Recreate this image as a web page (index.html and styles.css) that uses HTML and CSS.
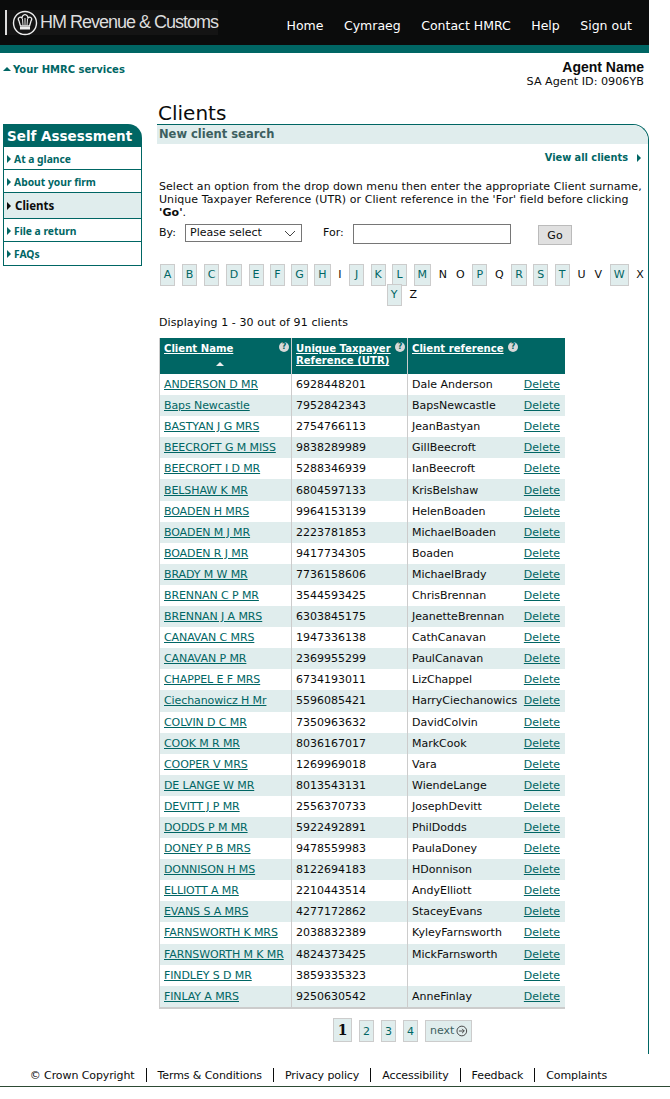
FILE: index.html
```html
<!DOCTYPE html>
<html>
<head>
	<meta charset="utf-8">
	<title>Clients - HM Revenue &amp; Customs</title>
	<link rel="stylesheet" href="styles.css">
</head>
<body>
	<div class="page">
		<header class="top">
			<div class="logo">
				<svg class="crest" width="26" height="26" viewBox="0 0 26 26">
					<circle cx="13" cy="13" r="11.5" fill="none" stroke="#eee" stroke-width="1.4"/>
					<path d="M7 11 C5 8 8 6 10 8 C10 5 12 5 13 4.500 C14 5 16 5 16 8 C18 6 21 8 19 11 L17.500 16 H8.500 Z" fill="none" stroke="#eee" stroke-width="1.300"/>
					<path d="M10.500 9 L11 15.500 M13 8 V15.500 M15.500 9 L15 15.500" stroke="#eee" stroke-width="1"/>
					<rect x="8" y="17" width="10" height="2.500" fill="#eee"/>
				</svg>
				<span class="logo-text">HM Revenue &amp; Customs</span>
			</div>
			<nav class="top-nav">
				<a href="#">Home</a>
				<a href="#">Cymraeg</a>
				<a href="#">Contact HMRC</a>
				<a href="#">Help</a>
				<a href="#">Sign out</a>
			</nav>
		</header>

		<div class="user-bar">
			<a class="services" href="#">Your HMRC services</a>
			<div class="agent">
				<strong>Agent Name</strong>
				<span>SA Agent ID: 0906YB</span>
			</div>
		</div>

		<div class="columns">
			<aside class="side">
				<h2>Self Assessment</h2>
				<ul>
					<li><a href="#">At a glance</a></li>
					<li><a href="#">About your firm</a></li>
					<li class="current"><a href="#">Clients</a></li>
					<li><a href="#">File a return</a></li>
					<li><a href="#">FAQs</a></li>
				</ul>
			</aside>

			<main class="content">
				<h1>Clients</h1>
				<section class="panel">
					<h3>New client search</h3>
					<div class="view-all"><a href="#">View all clients</a></div>
					<p class="intro">Select an option from the drop down menu then enter the appropriate Client surname, Unique Taxpayer Reference (UTR) or Client reference in the 'For' field before clicking <b>'Go'</b>.</p>
					<form class="search">
						<label class="by">By:</label>
						<span class="select">Please select
							<svg width="12" height="7" viewBox="0 0 12 7"><path d="M1 1 L6 6 L11 1" fill="none" stroke="#444" stroke-width="1"/></svg>
						</span>
						<label class="for">For:</label>
						<span class="field"></span>
						<button type="button" class="go">Go</button>
					</form>

					<div class="letters">
						<a href="#">A</a><a href="#">B</a><a href="#">C</a><a href="#">D</a><a href="#">E</a><a href="#">F</a><a href="#">G</a><a href="#">H</a><span>I</span><a href="#">J</a><a href="#">K</a><a href="#">L</a><a href="#">M</a><span>N</span><span>O</span><a href="#">P</a><span>Q</span><a href="#">R</a><a href="#">S</a><a href="#">T</a><span>U</span><span>V</span><a href="#">W</a><span>X</span><a href="#">Y</a><span>Z</span>
					</div>

					<p class="count">Displaying 1 - 30 out of 91 clients</p>

					<table class="clients">
						<thead>
							<tr>
								<th class="col-name"><a href="#">Client Name</a><i class="q">?</i><span class="sort"></span></th>
								<th class="col-utr"><a href="#">Unique Taxpayer Reference (UTR)</a><i class="q">?</i></th>
								<th colspan="2"><a href="#">Client reference</a><i class="q q-inline">?</i></th>
							</tr>
						</thead>
						<tbody>
							<tr><td><a href="#">ANDERSON D MR</a></td><td>6928448201</td><td>Dale Anderson</td><td><a href="#">Delete</a></td></tr>
							<tr><td><a href="#">Baps Newcastle</a></td><td>7952842343</td><td>BapsNewcastle</td><td><a href="#">Delete</a></td></tr>
							<tr><td><a href="#">BASTYAN J G MRS</a></td><td>2754766113</td><td>JeanBastyan</td><td><a href="#">Delete</a></td></tr>
							<tr><td><a href="#">BEECROFT G M MISS</a></td><td>9838289989</td><td>GillBeecroft</td><td><a href="#">Delete</a></td></tr>
							<tr><td><a href="#">BEECROFT I D MR</a></td><td>5288346939</td><td>IanBeecroft</td><td><a href="#">Delete</a></td></tr>
							<tr><td><a href="#">BELSHAW K MR</a></td><td>6804597133</td><td>KrisBelshaw</td><td><a href="#">Delete</a></td></tr>
							<tr><td><a href="#">BOADEN H MRS</a></td><td>9964153139</td><td>HelenBoaden</td><td><a href="#">Delete</a></td></tr>
							<tr><td><a href="#">BOADEN M J MR</a></td><td>2223781853</td><td>MichaelBoaden</td><td><a href="#">Delete</a></td></tr>
							<tr><td><a href="#">BOADEN R J MR</a></td><td>9417734305</td><td>Boaden</td><td><a href="#">Delete</a></td></tr>
							<tr><td><a href="#">BRADY M W MR</a></td><td>7736158606</td><td>MichaelBrady</td><td><a href="#">Delete</a></td></tr>
							<tr><td><a href="#">BRENNAN C P MR</a></td><td>3544593425</td><td>ChrisBrennan</td><td><a href="#">Delete</a></td></tr>
							<tr><td><a href="#">BRENNAN J A MRS</a></td><td>6303845175</td><td>JeanetteBrennan</td><td><a href="#">Delete</a></td></tr>
							<tr><td><a href="#">CANAVAN C MRS</a></td><td>1947336138</td><td>CathCanavan</td><td><a href="#">Delete</a></td></tr>
							<tr><td><a href="#">CANAVAN P MR</a></td><td>2369955299</td><td>PaulCanavan</td><td><a href="#">Delete</a></td></tr>
							<tr><td><a href="#">CHAPPEL E F MRS</a></td><td>6734193011</td><td>LizChappel</td><td><a href="#">Delete</a></td></tr>
							<tr><td><a href="#">Ciechanowicz H Mr</a></td><td>5596085421</td><td>HarryCiechanowics</td><td><a href="#">Delete</a></td></tr>
							<tr><td><a href="#">COLVIN D C MR</a></td><td>7350963632</td><td>DavidColvin</td><td><a href="#">Delete</a></td></tr>
							<tr><td><a href="#">COOK M R MR</a></td><td>8036167017</td><td>MarkCook</td><td><a href="#">Delete</a></td></tr>
							<tr><td><a href="#">COOPER V MRS</a></td><td>1269969018</td><td>Vara</td><td><a href="#">Delete</a></td></tr>
							<tr><td><a href="#">DE LANGE W MR</a></td><td>8013543131</td><td>WiendeLange</td><td><a href="#">Delete</a></td></tr>
							<tr><td><a href="#">DEVITT J P MR</a></td><td>2556370733</td><td>JosephDevitt</td><td><a href="#">Delete</a></td></tr>
							<tr><td><a href="#">DODDS P M MR</a></td><td>5922492891</td><td>PhilDodds</td><td><a href="#">Delete</a></td></tr>
							<tr><td><a href="#">DONEY P B MRS</a></td><td>9478559983</td><td>PaulaDoney</td><td><a href="#">Delete</a></td></tr>
							<tr><td><a href="#">DONNISON H MS</a></td><td>8122694183</td><td>HDonnison</td><td><a href="#">Delete</a></td></tr>
							<tr><td><a href="#">ELLIOTT A MR</a></td><td>2210443514</td><td>AndyElliott</td><td><a href="#">Delete</a></td></tr>
							<tr><td><a href="#">EVANS S A MRS</a></td><td>4277172862</td><td>StaceyEvans</td><td><a href="#">Delete</a></td></tr>
							<tr><td><a href="#">FARNSWORTH K MRS</a></td><td>2038832389</td><td>KyleyFarnsworth</td><td><a href="#">Delete</a></td></tr>
							<tr><td><a href="#">FARNSWORTH M K MR</a></td><td>4824373425</td><td>MickFarnsworth</td><td><a href="#">Delete</a></td></tr>
							<tr><td><a href="#">FINDLEY S D MR</a></td><td>3859335323</td><td></td><td><a href="#">Delete</a></td></tr>
							<tr><td><a href="#">FINLAY A MRS</a></td><td>9250630542</td><td>AnneFinlay</td><td><a href="#">Delete</a></td></tr>
						</tbody>
					</table>

					<div class="pager">
						<span class="on">1</span>
						<a href="#">2</a>
						<a href="#">3</a>
						<a href="#">4</a>
						<a href="#" class="next">next
							<svg width="12" height="12" viewBox="0 0 12 12"><circle cx="6" cy="6" r="5" fill="none" stroke="#444" stroke-width="1"/><path d="M3 6 H8.500 M6.300 3.800 L8.500 6 L6.300 8.200" fill="none" stroke="#444" stroke-width="1"/></svg>
						</a>
					</div>
				</section>
			</main>
		</div>
	</div>

	<footer class="foot">
		<span>© Crown Copyright</span>
		<a href="#">Terms &amp; Conditions</a>
		<a href="#">Privacy policy</a>
		<a href="#">Accessibility</a>
		<a href="#">Feedback</a>
		<a href="#">Complaints</a>
	</footer>
</body>
</html>
```

FILE: styles.css
```css
body {
	margin: 0;
	font-family: "DejaVu Sans", Verdana, sans-serif;
	font-size: 11px;
	color: #0b0c0c;
	background: #fff;
}

a {
	color: #006664;
}

.page {
	width: 649px;
}

/* header */
.top {
	display: flex;
	justify-content: space-between;
	height: 45px;
	background: #0b0c0c;
	border-bottom: 8px solid #006664;
}

.logo {
	display: flex;
	align-items: center;
	gap: 2px;
	height: 25px;
	width: 213px;
	margin: 10px 0 0 5px;
	padding-left: 5px;
	background: #141414;
	border-left: 2px solid #ddd;
	box-sizing: border-box;
}

.crest {
	flex: none;
}

.logo-text {
	font-family: "Liberation Sans", Arial, sans-serif;
	font-size: 18px;
	letter-spacing: -1px;
	color: #ddd;
	white-space: nowrap;
}

.top-nav {
	display: flex;
	gap: 20.500px;
	margin: 18px 17px 0 0;
}

.top-nav a {
	color: #fff;
	font-size: 12.500px;
	text-decoration: none;
	line-height: 16px;
}

/* services + agent */
.user-bar {
	display: flex;
	justify-content: space-between;
	height: 51px;
}

.services {
	margin: 10px 0 0 13px;
	position: relative;
	font-weight: bold;
	font-size: 10px;
	line-height: 13px;
	text-decoration: none;
}

.services::before {
	content: "";
	position: absolute;
	left: -10px;
	top: 4px;
	border: 4px solid transparent;
	border-top: 0;
	border-bottom: 4px solid #006664;
}

.agent {
	display: flex;
	flex-direction: column;
	align-items: flex-end;
	margin: 6px 5px 0 0;
	font-size: 11.200px;
	line-height: 13px;
}

.agent strong {
	font-family: "Liberation Sans", Arial, sans-serif;
	font-size: 14px;
	line-height: 16px;
}

/* sidebar */
.columns {
	display: flex;
	align-items: flex-start;
}

.side {
	width: 139px;
	margin: 20px 15px 0 3px;
	flex: none;
}

.side h2 {
	margin: 0;
	height: 23px;
	padding-left: 4px;
	background: #006664;
	border-radius: 0 14px 0 0;
	color: #fff;
	font-size: 13.500px;
	line-height: 25px;
	white-space: nowrap;
}

.side ul {
	margin: 0;
	padding: 0;
	list-style: none;
	border: 1px solid #006664;
	border-top: 0;
}

.side li {
	height: 22px;
	border-bottom: 1px solid #006664;
	font-family: "Noto Sans", Verdana, sans-serif;
	font-size: 10.300px;
	font-weight: bold;
	line-height: 24px;
	padding-left: 10px;
	position: relative;
}

.side li:last-child {
	border-bottom: 0;
	height: 23px;
}

.side li::before {
	content: "";
	position: absolute;
	left: 3px;
	top: 8px;
	border: 4px solid transparent;
	border-right: 0;
	border-left: 4px solid #006664;
}

.side a {
	text-decoration: none;
}

.side .current {
	height: 25px;
	background: #e0eded;
	font-size: 11.500px;
	line-height: 25px;
	padding-left: 11px;
}

.side .current a {
	color: #0b0c0c;
}

.side .current::before {
	border-left-color: #0b0c0c;
	top: 9px;
}

/* main column */
.content {
	width: 492px;
}

h1 {
	margin: 0;
	height: 20px;
	padding-left: 1px;
	font-size: 20px;
	font-weight: normal;
	line-height: 18px;
}

.panel {
	height: 929px;
	border-top: 1px solid #006664;
	border-right: 1px solid #006664;
	border-radius: 0 16px 0 0;
}

.panel h3 {
	margin: 0;
	height: 19px;
	padding-left: 2px;
	background: #e0eded;
	border-radius: 0 16px 0 0;
	color: #3d5f60;
	font-size: 11.500px;
	line-height: 19px;
}

.view-all {
	margin-top: 7px;
	padding-right: 20px;
	text-align: right;
	line-height: 13px;
	position: relative;
}

.view-all a {
	font-weight: bold;
	font-size: 9.800px;
	text-decoration: none;
}

.view-all::after {
	content: "";
	position: absolute;
	right: 7px;
	top: 3px;
	border: 4px solid transparent;
	border-right: 0;
	border-left: 4px solid #006664;
}

.intro {
	margin: 16px 0 0 2px;
	width: 486px;
	font-size: 11px;
	line-height: 13px;
	letter-spacing: 0.060px;
}

.search {
	display: flex;
	align-items: flex-start;
	height: 21px;
	margin: 5px 0 0 2px;
	line-height: 18px;
}

.by {
	width: 26px;
}

.select {
	display: flex;
	justify-content: space-between;
	align-items: center;
	width: 117px;
	height: 18px;
	padding: 0 5px 0 4px;
	border: 1px solid #767676;
	box-sizing: border-box;
	line-height: 16px;
}

.for {
	margin-left: 21px;
	width: 30px;
}

.field {
	width: 158px;
	height: 20px;
	border: 1px solid #767676;
	box-sizing: border-box;
}

.go {
	width: 34px;
	height: 20px;
	margin: 1px 0 0 27px;
	padding: 0;
	background: #e0e0e0;
	border: 1px solid #bbb;
	color: #0b0c0c;
	font-family: inherit;
	font-size: 11px;
}

.letters {
	margin: 19px -3px 0;
	text-align: center;
	line-height: 20px;
}

.letters a,
.letters span {
	display: inline-block;
	line-height: 20px;
	height: 20px;
	vertical-align: top;
	padding: 0 3px;
	margin: 0 3.200px -2px;
}

.letters a {
	min-width: 7px;
	background: #e0eded;
	border: 1px solid #ccc;
	text-decoration: none;
}

.letters span {
	padding: 1px 0;
	margin: 0 4.500px -2px;
}

.count {
	margin: 12px 0 0 2px;
	line-height: 13px;
	letter-spacing: 0.100px;
}

/* table */
.clients {
	width: 406px;
	margin: 9px 0 0 2px;
	border-collapse: separate;
	border-spacing: 0;
	table-layout: fixed;
	border-left: 1px solid #ccc;
	border-bottom: 2px solid #ccc;
	font-size: 11px;
}

.clients th {
	height: 36px;
	padding: 5px 0 0 4px;
	background: #006664;
	color: #fff;
	text-align: left;
	vertical-align: top;
	position: relative;
	border-right: 1px solid #ccc;
	line-height: 12px;
	box-sizing: border-box;
	font-size: 10.100px;
}

.clients th:last-child {
	border-right: 0;
}

.clients th a {
	color: #fff;
}

.col-name {
	width: 132px;
}

.col-utr {
	width: 116px;
}

.q {
	position: absolute;
	right: 2px;
	top: 4px;
	width: 10px;
	height: 10px;
	border-radius: 50%;
	background: #d8d8d8;
	color: #006664;
	font-size: 8px;
	font-weight: bold;
	font-style: normal;
	line-height: 10px;
	text-align: center;
}

.q-inline {
	right: auto;
	left: 100px;
}

.sort {
	position: absolute;
	left: 56px;
	top: 24px;
	border: 4px solid transparent;
	border-top: 0;
	border-bottom: 4px solid #eee;
}

.clients td {
	height: 21.100px;
	padding: 0 0 0 4px;
	border-right: 1px solid #ccc;
	box-sizing: border-box;
	white-space: nowrap;
	line-height: 13px;
}

.clients td:first-child {
	letter-spacing: -0.100px;
}

.clients td:nth-child(3) {
	border-right: 0;
}

.clients td:last-child {
	border-right: 0;
	padding: 0 5px 0 0;
	text-align: right;
}

.clients tbody tr:nth-child(even) {
	background: #e0eded;
}

/* pages */
.pager {
	display: flex;
	justify-content: center;
	align-items: flex-end;
	gap: 7px;
	height: 24px;
	margin-top: 9px;
}

.pager a,
.pager span {
	display: block;
	width: 15px;
	height: 22px;
	background: #e0eded;
	border: 1px solid #ccc;
	box-sizing: border-box;
	line-height: 22px;
	text-align: center;
	text-decoration: none;
}

.pager .on {
	width: 19px;
	height: 24px;
	font-family: "DejaVu Serif", serif;
	font-size: 14px;
	font-weight: bold;
	line-height: 22px;
}

.pager .next {
	display: flex;
	align-items: center;
	gap: 2px;
	width: 47px;
	padding: 0 3px 0 4px;
	color: #3d5f60;
}

/* footer */
.foot {
	display: flex;
	justify-content: center;
	margin-top: 14px;
	padding: 0 33px 4px 0;
	border-bottom: 1px solid #2d4a34;
	letter-spacing: -0.100px;
}

.foot a,
.foot span {
	height: 14px;
	padding: 0 11px;
	border-left: 1px solid #0b0c0c;
	color: #0b0c0c;
	line-height: 16px;
	text-decoration: none;
}

.foot span {
	border-left: 0;
}
```
